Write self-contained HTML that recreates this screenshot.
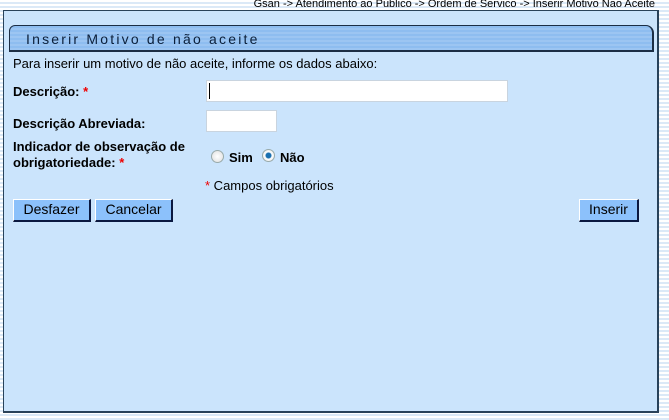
<!DOCTYPE html>
<html><head><meta charset="utf-8"><style>
body{margin:0;width:669px;height:420px;overflow:hidden;position:relative;font-family:"Liberation Sans",Arial,sans-serif;
background:repeating-linear-gradient(180deg,#fff 0 2px,#dbe9f7 2px 4px);}
.abs{position:absolute}
#crumb{right:14px;top:-2px;font-size:11px;color:#000;letter-spacing:0px}
#panel{left:3px;top:10px;background:#cbe4fc;border:1px solid #29425a;border-right:2px solid #29425a;border-bottom:2px solid #29425a;box-sizing:border-box;width:656px;height:403px}
#title{left:9px;top:25px;width:645px;height:27px;box-sizing:border-box;border:1px solid #1c2e45;border-right:2px solid #1c2e45;border-bottom:2px solid #1c2e45;border-radius:6px 8px 0 0;
background:repeating-linear-gradient(180deg,#8ebdf0 0 2px,#9cc5f2 2px 4px);font-size:14px;letter-spacing:2.2px;color:#0b1f3a;padding:5px 0 0 16px}
.t{font-size:13px;color:#000}
.b{font-weight:bold}
.r{color:#e00}
input.tx{position:absolute;height:22px;box-sizing:border-box;border:1px solid #c9d4df;background:#fff;margin:0}
.btn{position:absolute;height:23px;box-sizing:border-box;background:#8cc1fb;border:1px solid #000;border-top-color:#fff;border-left-color:#fff;border-right:2px solid #0a1840;border-bottom:2px solid #0a1840;font-size:14px;text-align:center;line-height:19px;color:#000}
.rad{position:absolute;width:11px;height:11px;border-radius:50%;border:1px solid #9aa;background:radial-gradient(circle,#fff,#ddd)}
</style></head><body>
<div class="abs" id="crumb">Gsan -&gt; Atendimento ao Publico -&gt; Ordem de Servico -&gt; Inserir Motivo Nao Aceite</div>
<div class="abs" id="panel"></div>
<div class="abs" id="title">Inserir Motivo de não aceite</div>
<div class="abs t" style="left:13px;top:56px">Para inserir um motivo de não aceite, informe os dados abaixo:</div>
<div class="abs t b" style="left:13px;top:84px">Descrição: <span class="r">*</span></div>
<input class="tx" style="left:206px;top:80px;width:302px">
<div class="abs" style="left:209px;top:83px;width:1px;height:16px;background:#000"></div>
<div class="abs t b" style="left:13px;top:116px">Descrição Abreviada:</div>
<input class="tx" style="left:206px;top:110px;width:71px">
<div class="abs t b" style="left:13px;top:139px;line-height:16px">Indicador de observação de<br>obrigatoriedade: <span class="r">*</span></div>
<div class="rad" style="left:211px;top:150px"></div>
<div class="abs t b" style="left:229px;top:150px">Sim</div>
<div class="rad" style="left:262px;top:149px;background:radial-gradient(circle,#1a6fb0 0 2.5px,#fff 3.5px,#ddd)"></div>
<div class="abs t b" style="left:280px;top:150px">Não</div>
<div class="abs t" style="left:205px;top:178px"><span class="r">*</span> Campos obrigatórios</div>
<div class="btn" style="left:13px;top:199px;width:78px">Desfazer</div>
<div class="btn" style="left:95px;top:199px;width:78px">Cancelar</div>
<div class="btn" style="left:579px;top:199px;width:60px">Inserir</div>
</body></html>
